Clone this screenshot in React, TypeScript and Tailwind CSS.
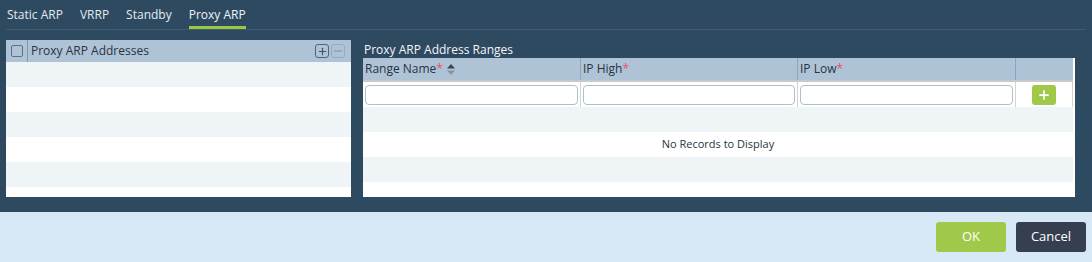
import { Plus } from 'lucide-react';

const TABS = ['Static ARP', 'VRRP', 'Standby', 'Proxy ARP'];
const ACTIVE_TAB = 'Proxy ARP';

const COLUMNS = [
  { label: 'Range Name', sortable: true, width: 'w-[218px]' },
  { label: 'IP High', sortable: false, width: 'w-[217px]' },
  { label: 'IP Low', sortable: false, width: 'w-[218px]' },
];

export default function App() {
  return (
    <div className="flex h-[262px] w-[1092px] flex-col font-['Open_Sans',sans-serif] text-[12px]">
      <div className="flex h-[212px] flex-col bg-[#2e4a61] px-[6px]">
        <nav className="flex h-[30px] items-stretch gap-[17px] border-b border-[#42596f] pl-px">
          {TABS.map((tab) => (
            <div
              key={tab}
              className={
                tab === ACTIVE_TAB
                  ? 'flex items-center border-b-[3px] border-[#9cc84a] pt-[3px] text-[#eef3f7]'
                  : 'flex items-center border-b-[3px] border-transparent pt-[3px] text-[#e4ebf0]'
              }
            >
              {tab}
            </div>
          ))}
        </nav>

        <div className="mt-[10px] flex h-[157px] gap-[12px]">
          <AddressList />
          <RangesTable />
        </div>
      </div>

      <footer className="flex flex-1 items-center justify-end gap-[10px] bg-[#d7e9f7] pr-[6px]">
        <button
          type="button"
          className="h-[30px] w-[70px] rounded-[3px] bg-[#a0c94a] text-[13px] text-white"
        >
          OK
        </button>
        <button
          type="button"
          className="h-[30px] w-[70px] rounded-[3px] bg-[#363f50] text-[13px] text-white"
        >
          Cancel
        </button>
      </footer>
    </div>
  );
}

function AddressList() {
  return (
    <section className="flex w-[345px] flex-col overflow-hidden bg-white">
      <div className="flex h-[22px] shrink-0 items-center bg-[#afc3d7] text-[#28333f]">
        <div className="flex h-full w-[22px] items-center justify-center border-r border-[#8198ae] pl-[1px]">
          <span className="size-[12px] rounded-[2px] border border-[#5b7187]" />
        </div>
        <span className="ml-[3px] flex-1">Proxy ARP Addresses</span>
        <div className="mr-[6px] flex gap-[2px]">
          <span className="flex size-[14px] items-center justify-center rounded-[3px] border border-[#4e667b] text-[#3f5669]">
            <Plus className="size-[11px]" strokeWidth={2.5} />
          </span>
          <span className="flex size-[14px] items-center justify-center rounded-[3px] border border-[#94aabd]">
            <span className="h-[1.5px] w-[8px] bg-[#94aabd]" />
          </span>
        </div>
      </div>
      <StripedRows count={6} />
    </section>
  );
}

function StripedRows({ count, message }: { count: number; message?: string }) {
  return (
    <div className="flex flex-col">
      {Array.from({ length: count }, (_, i) => (
        <div
          key={i}
          className={
            i % 2 === 0
              ? 'flex h-[25px] shrink-0 items-center justify-center bg-[#eff4f7] text-[11px] text-[#2a3440]'
              : 'flex h-[25px] shrink-0 items-center justify-center bg-white text-[11px] text-[#2a3440]'
          }
        >
          {message && i === 1 ? message : null}
        </div>
      ))}
    </div>
  );
}

function RangesTable() {
  return (
    <section className="flex w-[712px] flex-col">
      <h3 className="flex h-[18px] shrink-0 items-end pl-px text-[12px] leading-[16px] text-[#f3f6f9]">
        Proxy ARP Address Ranges
      </h3>
      <div className="flex flex-1 flex-col overflow-hidden bg-white pr-[2px]">
        <div className="flex h-[22px] shrink-0 bg-[#afc3d7] text-[#28333f]">
          {COLUMNS.map((col) => (
            <div
              key={col.label}
              className={`flex items-center border-r border-[#8ea5ba] pl-[2px] ${col.width}`}
            >
              {col.label}
              <span className="text-[#ec4b6b]">*</span>
              {col.sortable && <SortIcon />}
            </div>
          ))}
          <div className="flex-1" />
        </div>
        <div className="flex h-[27px] shrink-0 border-t-2 border-[#c9c9c9] bg-white">
          {COLUMNS.map((col) => (
            <div
              key={col.label}
              className={`flex items-center border-r border-[#d3d3d3] px-[2px] ${col.width}`}
            >
              <input
                type="text"
                className="h-[20px] w-full rounded-[4px] border border-[#a9c0d1] bg-white outline-none"
              />
            </div>
          ))}
          <div className="flex flex-1 items-center justify-center border-r border-[#d3d3d3]">
            <button
              type="button"
              className="flex h-[20px] w-[24px] items-center justify-center rounded-[3px] bg-[#a0c94a] text-white"
            >
              <Plus className="size-[14px]" strokeWidth={3} />
            </button>
          </div>
        </div>
        <StripedRows count={4} message="No Records to Display" />
      </div>
    </section>
  );
}

function SortIcon() {
  return (
    <svg viewBox="0 0 8 11" className="ml-[4px] h-[11px] w-[8px]">
      <path d="M4 0 L8 4.5 L0 4.5 Z" fill="#3b4551" />
      <path d="M4 11 L8 6.5 L0 6.5 Z" fill="#8a939c" />
    </svg>
  );
}
